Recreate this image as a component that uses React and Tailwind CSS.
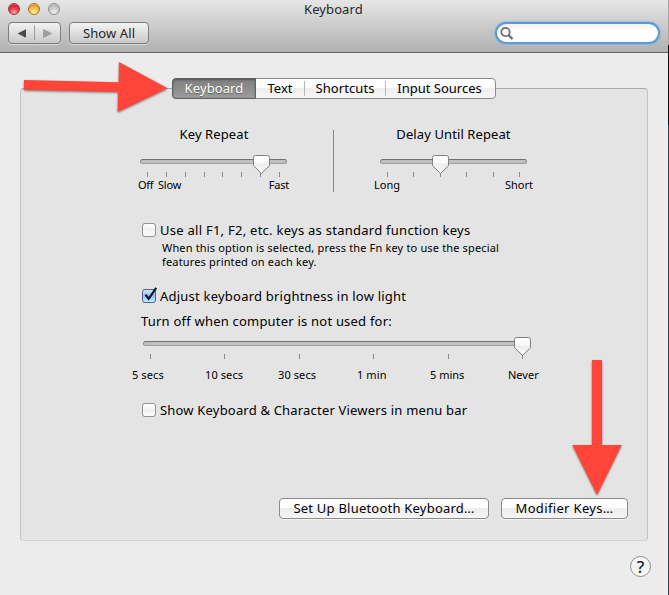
const track = "h-[5px] rounded-full border border-t-[#707070] border-x-[#8c8c8c] border-b-[#9f9f9f] bg-[#c0c0c0]";

function Thumb({ className }) {
  return (
    <svg className={`absolute -top-[5px] h-5 w-[18px] ${className}`} viewBox="0 0 18 20">
      <defs>
        <linearGradient id="thumb" x1="0" y1="0" x2="0" y2="1">
          <stop offset="0" stopColor="#ffffff" />
          <stop offset="0.4" stopColor="#fafafa" />
          <stop offset="0.5" stopColor="#ededed" />
          <stop offset="1" stopColor="#fbfbfb" />
        </linearGradient>
      </defs>
      <path d="M2.5 .5h12q2 0 2 2v8.2L8.5 18.5.5 10.7V2.5q0-2 2-2Z" fill="url(#thumb)" stroke="#808080" />
    </svg>
  );
}

function Ticks({ count, className }) {
  return (
    <div className={`mt-2 flex h-[5px] justify-between ${className}`}>
      {Array.from({ length: count }, (_, i) => (
        <div key={i} className="w-px bg-[#8a8a8a]" />
      ))}
    </div>
  );
}

function Checkbox({ checked }) {
  return (
    <div
      className={`relative size-[14px] shrink-0 rounded-[3px] border ${
        checked
          ? "border-[#55608f] bg-linear-to-b from-[#d5e7fa] via-[#8fbff0] to-[#c5f0ff]"
          : "border-[#929292] bg-linear-to-b from-white via-[#f1f1f1] to-[#fbfbfb]"
      }`}
    >
      {checked && (
        <svg className="absolute -top-[3px] -left-px h-4 w-4" viewBox="0 0 16 16" fill="none">
          <path d="M3.500 7.600 6.700 11.800 14.200 .8" stroke="#111a33" strokeWidth="2.300" />
        </svg>
      )}
    </div>
  );
}

function CheckRow({ checked, className, children }) {
  return (
    <div className={`ml-[121px] flex h-4 items-center gap-1 ${className}`}>
      <Checkbox checked={checked} />
      <span>{children}</span>
    </div>
  );
}

function Light({ className }) {
  return <div className={`size-3 rounded-full border ${className}`} />;
}

const button =
  "flex h-[21px] items-center justify-center rounded-[4px] border border-[#8b8b8b] bg-linear-to-b from-white from-45% via-[#eeeeee] via-50% to-[#f6f6f6] pb-0.5 shadow-[0_1px_0_#f3f3f3]";

const toolButton =
  "flex h-[22px] items-center rounded-[4px] border border-[#7d7d7d] bg-linear-to-b from-[#f3f3f3] to-[#c9c9c9] shadow-[0_1px_0_#d8d8d8]";

export default function App() {
  return (
    <div className="relative flex h-[595px] w-[669px] overflow-hidden bg-[#ececec] font-['Noto_Sans',sans-serif] text-[13px] leading-4 whitespace-nowrap text-black">
      <div className="flex w-[668px] flex-col">
        <header className="h-[53px] border-b border-[#636363] bg-linear-to-b from-[#e6e6e6] to-[#b1b1b1]">
          <div className="flex h-[22px] items-start pt-[3px] pl-2">
            <div className="flex w-[296px] gap-2">
              <Light className="border-[#9c3a3f] bg-[radial-gradient(circle_at_50%_85%,#ffb0a8_0%,#ee3b46_45%,#d8263a_75%,#f3b0b0_100%)]" />
              <Light className="border-[#a8713a] bg-[radial-gradient(circle_at_50%_85%,#fff6a0_0%,#f7c24a_45%,#e09a2b_75%,#f8e4a8_100%)]" />
              <Light className="border-[#8f8f8f] bg-[radial-gradient(circle_at_50%_85%,#f0f0f0_0%,#cecece_45%,#b8b8b8_75%,#e0e0e0_100%)]" />
            </div>
            <h1 className="-mt-0.5 tracking-[0.1px] text-[#262626]">Keyboard</h1>
          </div>
          <div className="flex h-[22px] items-center pl-2">
            <div className={`${toolButton} w-[53px]`}>
              <svg className="h-5 w-[51px]" viewBox="0 0 51 20">
                <path d="M8.500 10.500 17 6.200v8.600Z" fill="#4a4a4a" />
                <path d="M25.500 2.500v15" stroke="#9a9a9a" />
                <path d="M42.500 10.500 34.500 6.500v8Z" fill="#a0a0a0" stroke="#8a8a8a" strokeWidth=".6" />
              </svg>
            </div>
            <div className={`${toolButton} ml-2 w-20 justify-center tracking-[0.1px] text-[#262626]`}>Show All</div>
            <div className="ml-[346px] flex h-[22px] w-[165px] shrink-0 items-center rounded-full border-2 border-[#5a9ad6] bg-linear-to-b from-[#f2f2f2] to-white to-40% pl-[3px] shadow-[0_0_1px_1px_#86b4dea0]">
              <svg className="size-[15px]" viewBox="0 0 15 15" fill="none" stroke="#6c6c6c">
                <circle cx="5.500" cy="6" r="4.200" strokeWidth="1.700" />
                <path d="m8.500 9 4 4" strokeWidth="2.300" />
              </svg>
            </div>
          </div>
        </header>

        <main className="flex flex-col px-5 pt-[35px]">
          <section className="h-[453px] w-[628px] rounded-[4px] border border-t-[#a8a8a8] border-x-[#c2c2c2] border-b-[#d2d2d2] bg-[#e4e4e4]">
            <div className="-mt-[11px] ml-[151px] flex h-[21px] w-[324px] items-center rounded-[4px] border border-[#8b8b8b] bg-linear-to-b from-white from-45% via-[#efefef] via-50% to-[#f7f7f7]">
              <div className="-my-px -ml-px flex h-[21px] w-[84px] items-center justify-center self-start rounded-l-[4px] border border-[#606060] bg-linear-to-b from-[#7f7f7f] to-[#9c9c9c] pb-0.5 tracking-[0.1px] text-white shadow-[inset_0_1px_2px_#00000055] text-shadow-[0_1px_1px_#0006]">
                Keyboard
              </div>
              <div className="w-12 pb-0.5 text-center">Text</div>
              <div className="h-[15px] w-px bg-[#b8b8b8]" />
              <div className="w-20 pb-0.5 text-center tracking-[0.1px]">Shortcuts</div>
              <div className="h-[15px] w-px bg-[#b8b8b8]" />
              <div className="flex-1 pr-0.5 pb-0.5 text-center">Input Sources</div>
            </div>

            <div className="mt-[27px] ml-[119px] flex h-[66px]">
              <div className="w-[147px]">
                <div className="pl-px text-center tracking-[0.1px]">Key Repeat</div>
                <div className={`relative mt-[17px] ${track}`}>
                  <Thumb className="left-[112px]" />
                </div>
                <Ticks count={8} className="mr-[7px] ml-[7px]" />
                <div className="mt-px -mr-0.5 -ml-0.5 flex text-[11px] leading-[14px]">
                  <span className="w-5 tracking-[-0.3px]">Off</span>
                  <span className="tracking-[-0.2px]">Slow</span>
                  <span className="ml-auto tracking-[-0.2px]">Fast</span>
                </div>
              </div>
              <div className="mt-1 ml-[46px] w-px bg-[#858585]" />
              <div className="ml-[46px] w-[147px]">
                <div className="text-center tracking-[0.1px]">Delay Until Repeat</div>
                <div className={`relative mt-[17px] ${track}`}>
                  <Thumb className="left-[51px]" />
                </div>
                <Ticks count={6} className="mr-[7px] ml-[7px]" />
                <div className="mt-px -mr-1.5 -ml-1.5 flex justify-between text-[11px] leading-[14px]">
                  <span>Long</span>
                  <span>Short</span>
                </div>
              </div>
            </div>

            <CheckRow className="mt-[30px] tracking-[0.26px]">Use all F1, F2, etc. keys as standard function keys</CheckRow>
            <p className="mt-[3px] ml-[141px] text-[11px] leading-[14px] tracking-[0.16px]">
              When this option is selected, press the Fn key to use the special
              <br />
              features printed on each key.
            </p>
            <CheckRow checked className="mt-[19px] tracking-[0.22px]">Adjust keyboard brightness in low light</CheckRow>
            <div className="mt-[9px] ml-[120px] tracking-[0.21px]">Turn off when computer is not used for:</div>
            <div className={`relative mt-3 ml-[122px] w-[388px] ${track}`}>
              <Thumb className="left-[370px]" />
            </div>
            <Ticks count={6} className="ml-[129px] w-[373px]" />
            <div className="mt-[9px] ml-[111px] flex text-[11px] leading-[14px]">
              <span className="w-[73px] tracking-[0.1px]">5 secs</span>
              <span className="w-[73px] tracking-[0.1px]">10 secs</span>
              <span className="w-[79px] tracking-[0.1px]">30 secs</span>
              <span className="w-[73px] tracking-[0.1px]">1 min</span>
              <span className="w-[78px]">5 mins</span>
              <span>Never</span>
            </div>
            <CheckRow className="mt-5 tracking-[0.19px]">Show Keyboard &amp; Character Viewers in menu bar</CheckRow>

            <div className="mt-20 mr-[19px] flex justify-end gap-3">
              <div className={`${button} w-[210px] tracking-[0.22px]`}>Set Up Bluetooth Keyboard…</div>
              <div className={`${button} w-[127px] tracking-[0.34px]`}>Modifier Keys…</div>
            </div>
          </section>

          <div className="mt-[15px] mr-[-3px] flex size-[21px] items-center justify-center self-end rounded-full border border-[#8b8b8b] bg-linear-to-b from-white via-[#f0f0f0] to-white text-[17px] font-medium text-[#222]">
            ?
          </div>
        </main>
      </div>

      <div className="flex w-px flex-col">
        <div className="h-[45px] bg-[#a5a5a5]" />
        <div className="h-20 bg-[#0c0f12]" />
        <div className="flex-1 bg-[#30414b]" />
      </div>

      <svg className="absolute inset-0 h-[595px] w-[669px] drop-shadow-[0_1px_1px_#0007]" viewBox="0 0 669 595" fill="#ff453a">
        <path d="M24 80 118.700 82.300 119 62 167.700 88.300 117.700 112 118 92 24 90Z" />
        <path d="M592 360h10v85h19.700L597 495 572.300 445H592Z" />
      </svg>
    </div>
  );
}
